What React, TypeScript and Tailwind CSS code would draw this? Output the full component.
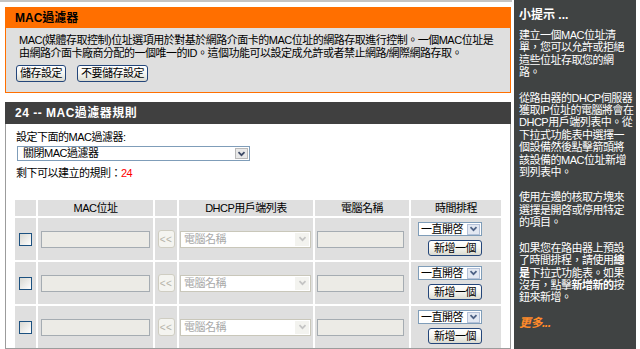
import React from "react";

const font = "font-['Liberation_Sans','Noto_Sans_CJK_TC',sans-serif]";

const Chevron = ({ color = "#4d6185" }: { color?: string }) => (
  <svg width="9" height="6" viewBox="0 0 9 6" fill="none">
    <path d="M1.5 1.2 4.5 4.2 7.5 1.2" stroke={color} strokeWidth="1.7" />
  </svg>
);

interface XpButtonProps {
  children: React.ReactNode;
  className?: string;
}

const XpButton = ({ children, className = "" }: XpButtonProps) => (
  <button
    type="button"
    className={`flex items-center justify-center rounded-[3px] border border-[#24467a] bg-linear-to-b from-white via-[#f5f5f1] to-[#dadad0] text-[11px] leading-none tracking-[-0.5px] text-black ${className}`}
  >
    {children}
  </button>
);

const ruleRows = [1, 2, 3];

const RuleRow = () => (
  <>
    <div className="flex items-center justify-center bg-[#dfdfdf]">
      <div className="h-[13px] w-[13px] border border-[#1c5180] bg-linear-to-br from-[#d8d8d2] to-white" />
    </div>
    <div className="flex items-center bg-[#dfdfdf] pl-[3px]">
      <div className="h-[17px] w-[109px] border border-[#a5acb2] bg-[#ecebe6]" />
    </div>
    <div className="flex items-center justify-center bg-[#dfdfdf]">
      <div className="flex h-[18px] w-[17px] items-center justify-center rounded-[3px] border border-[#cfcdc2] bg-[#f4f4f0] text-[10px] tracking-[0.5px] text-[#b5b3a8]">
        &lt;&lt;
      </div>
    </div>
    <div className="flex items-center bg-[#dfdfdf] pl-[1px]">
      <div className="flex h-[17px] w-[131px] items-center justify-between border border-[#c9c7ba] bg-white pl-[3px] pr-[1px]">
        <span className="text-[11px] tracking-[-0.5px] text-[#a8a8a8]">電腦名稱</span>
        <div className="flex h-[13px] w-[14px] items-center justify-center bg-[#f3f3ef]">
          <Chevron color="#c4c4c4" />
        </div>
      </div>
    </div>
    <div className="flex items-center bg-[#dfdfdf] pl-[2px]">
      <div className="h-[17px] w-[87px] border border-[#a5acb2] bg-[#ecebe6]" />
    </div>
    <div className="flex flex-col items-end gap-[4px] bg-[#dfdfdf] pr-[19px] pt-[4px]">
      <div className="flex h-[14px] w-[64px] items-center justify-between border border-[#7f9db9] bg-white pl-[2px] pr-[1px]">
        <span className="text-[11px] leading-none tracking-[-0.5px]">一直開啓</span>
        <div className="flex h-[11px] w-[13px] items-center justify-center border border-[#b4c1d8] bg-[#e3e8f2]">
          <Chevron />
        </div>
      </div>
      <XpButton className="h-[16px] w-[54px]">新增一個</XpButton>
    </div>
  </>
);

export default function App() {
  return (
    <div className={`flex h-[349px] w-[640px] overflow-hidden bg-white text-black ${font}`}>
      <div className="flex w-[512px] flex-col">
        <div className="h-[2px] bg-[#c4c4c4]" />

        <section className="ml-[5px] mt-[5px] w-[506px] border border-[#ff6f00]">
          <h2 className="flex h-[20px] items-center bg-[#ff6f00] pl-[9px] text-[12px] font-bold">
            MAC過濾器
          </h2>
          <div className="bg-[#dfdfdf] pb-[10px] pl-[10px] pt-[6px]">
            <p className="whitespace-nowrap pl-[3px] text-[11px] leading-[12.5px] tracking-[-0.5px]">
              MAC(媒體存取控制)位址選項用於對基於網路介面卡的MAC位址的網路存取進行控制。一個MAC位址是
              <br />
              由網路介面卡廠商分配的一個唯一的ID。這個功能可以設定成允許或者禁止網路/網際網路存取。
            </p>
            <div className="mt-[6px] flex gap-[11px]">
              <XpButton className="h-[17px] w-[50px]">儲存設定</XpButton>
              <XpButton className="h-[17px] w-[71px]">不要儲存設定</XpButton>
            </div>
          </div>
        </section>

        <section className="ml-[5px] mt-[9px] flex w-[506px] flex-1 flex-col">
          <h2 className="flex h-[22px] items-center bg-[#404040] pl-[10px] text-[12px] font-bold tracking-[0.5px] text-white">
            24 -- MAC過濾器規則
          </h2>
          <div className="flex-1 border-x border-b border-[#9c9c9c] bg-white pl-[10px] pt-[7px] text-[11px] tracking-[-0.5px]">
            <p className="leading-[12.5px]">設定下面的MAC過濾器:</p>
            <div className="ml-[1px] mt-[2.5px] flex h-[15px] w-[233px] items-center justify-between border border-[#7f9db9] bg-white pl-[5px] pr-[1px]">
              <span className="leading-none">關閉MAC過濾器</span>
              <div className="flex h-[11px] w-[13px] items-center justify-center border border-[#b9b9b9] bg-[#e8e8e8]">
                <Chevron color="#3d4a66" />
              </div>
            </div>
            <p className="mt-[6px] leading-[12.5px]">
              剩下可以建立的規則：<span className="text-[#ff0000]">24</span>
            </p>

            <div className="-ml-[1px] mt-[20.5px] grid grid-cols-[21px_115px_22px_134px_94px_90px] grid-rows-[16px_42px_42px_42px] gap-[2px]">
              <div className="bg-[#dfdfdf]" />
              <div className="flex items-center justify-center bg-[#dfdfdf]">MAC位址</div>
              <div className="bg-[#dfdfdf]" />
              <div className="flex items-center justify-center bg-[#dfdfdf]">DHCP用戶端列表</div>
              <div className="flex items-center justify-center bg-[#dfdfdf]">電腦名稱</div>
              <div className="flex items-center justify-center bg-[#dfdfdf]">時間排程</div>
              {ruleRows.map((row) => (
                <RuleRow key={row} />
              ))}
            </div>
          </div>
        </section>
      </div>

      <aside className="ml-[2px] w-[122px] bg-[#404343] pl-[5px] pt-[8px] text-white">
        <h3 className="text-[12px] font-bold leading-[14px]">小提示 ...</h3>
        <div className="mt-[7px] whitespace-nowrap text-[11px] leading-[12.4px] tracking-[-0.5px]">
          <p>
            建立一個MAC位址清
            <br />
            單，您可以允許或拒絕
            <br />
            這些位址存取您的網
            <br />
            路。
          </p>
          <p className="mt-[13px]">
            從路由器的DHCP伺服器
            <br />
            獲取IP位址的電腦將會在
            <br />
            DHCP用戶端列表中。從
            <br />
            下拉式功能表中選擇一
            <br />
            個設備然後點擊箭頭將
            <br />
            該設備的MAC位址新增
            <br />
            到列表中。
          </p>
          <p className="mt-[13px]">
            使用左邊的核取方塊來
            <br />
            選擇是開啓或停用特定
            <br />
            的項目。
          </p>
          <p className="mt-[13px]">
            如果您在路由器上預設
            <br />
            了時間排程，請使用<b>總</b>
            <br />
            <b>是</b>下拉式功能表。如果
            <br />
            沒有，點擊<b>新增新的</b>按
            <br />
            鈕來新增。
          </p>
          <p className="mt-[13px] text-[12px] font-bold italic text-[#ff8a2a]">更多...</p>
        </div>
      </aside>
    </div>
  );
}
